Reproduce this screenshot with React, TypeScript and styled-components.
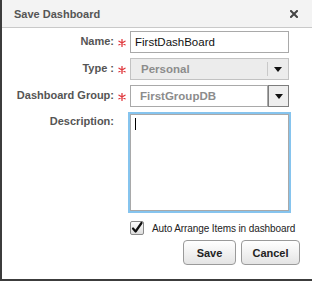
import React from 'react'
import styled, { createGlobalStyle } from 'styled-components'

const GlobalStyle = createGlobalStyle`
  html, body {
    margin: 0;
    padding: 0;
    background: #ffffff;
  }
  body {
    font-family: "Liberation Sans", Arial, Helvetica, sans-serif;
  }
`

const Dialog = styled.div`
  width: 312px;
  height: 281px;
  box-sizing: border-box;
  background: #ffffff;
  border-left: 2px solid #3c3c3c;
  border-bottom: 2px solid #3c3c3c;
  display: flex;
  flex-direction: column;
`

const TitleBar = styled.div`
  height: 27px;
  background: #f3f3f3;
  border-bottom: 1px solid #c9c9c9;
  display: flex;
  align-items: center;
  justify-content: space-between;
  padding: 0 14px 0 12px;
`

const Title = styled.span`
  font-size: 11px;
  font-weight: bold;
  color: #555555;
`

const CloseBtn = styled.span`
  display: flex;
  width: 8px;
  height: 8px;
`

const Form = styled.div`
  display: grid;
  grid-template-columns: 112px 16px 159px;
  grid-template-rows: 22px 22px 22px 101px;
  row-gap: 5px;
  padding-top: 3px;
  align-items: center;
`

const Label = styled.label<{ top?: boolean }>`
  font-size: 11px;
  font-weight: bold;
  color: #555555;
  text-align: right;
  align-self: ${(p) => (p.top ? 'start' : 'center')};
  padding-top: ${(p) => (p.top ? '5px' : '0')};
  margin-top: -2px;
`

const Star = styled.span`
  display: flex;
  justify-content: center;
  align-items: center;
  padding-top: 1px;
`

const TextInput = styled.div`
  height: 22px;
  box-sizing: border-box;
  border: 1px solid #a9a9a9;
  background: #ffffff;
  font-size: 11.5px;
  color: #111111;
  padding: 0 4px;
  display: flex;
  align-items: center;
`

const Select = styled.div<{ disabled?: boolean }>`
  height: 22px;
  box-sizing: border-box;
  display: flex;
  background: ${(p) => (p.disabled ? '#ececec' : '#ffffff')};
  border: ${(p) => (p.disabled ? '1px solid #c2c2c2' : 'none')};
`

const SelectValue = styled.div<{ boxed?: boolean }>`
  flex: 1;
  display: flex;
  align-items: center;
  padding: 0 ${(p) => (p.boxed ? '9px' : '10px')};
  font-size: 11.5px;
  font-weight: bold;
  color: #8c8c8c;
  box-sizing: border-box;
  border: ${(p) => (p.boxed ? '1px solid #a9a9a9' : 'none')};
`

const ArrowBox = styled.div<{ boxed?: boolean }>`
  width: 21px;
  flex: none;
  display: flex;
  align-items: center;
  justify-content: center;
  box-sizing: border-box;
  background: ${(p) => (p.boxed ? '#eeeeee' : 'transparent')};
  border: ${(p) => (p.boxed ? '1px solid #7d7d7d' : 'none')};
  border-left: ${(p) => (p.boxed ? '1px solid #7d7d7d' : '1px solid #c9c9c9')};
  margin: ${(p) => (p.boxed ? '0' : '3px 0')};
`

const Arrow = styled.span`
  width: 0;
  height: 0;
  border-left: 4px solid transparent;
  border-right: 4px solid transparent;
  border-top: 5px solid #111111;
`

const TextArea = styled.div`
  align-self: start;
  height: 97px;
  margin-top: 2px;
  box-sizing: border-box;
  border: 1px solid #a9a9a9;
  outline: 2px solid #86c4ee;
  background: #ffffff;
  padding: 3px 4px;
`

const Caret = styled.span`
  display: block;
  width: 1px;
  height: 12px;
  background: #000000;
`

const CheckRow = styled.div`
  display: flex;
  align-items: center;
  gap: 8px;
  padding-left: 128px;
  margin-top: 8px;
`

const CheckText = styled.span`
  font-size: 10px;
  letter-spacing: -0.1px;
  color: #222222;
`

const Buttons = styled.div`
  display: flex;
  justify-content: flex-end;
  gap: 5px;
  padding-right: 12px;
  margin-top: 5px;
`

const Button = styled.button<{ w: number }>`
  width: ${(p) => p.w}px;
  height: 25px;
  border: 1px solid #9a9a9a;
  border-radius: 4px;
  background: linear-gradient(#ffffff, #e4e4e4);
  font-family: "Liberation Sans", Arial, Helvetica, sans-serif;
  font-size: 11px;
  font-weight: bold;
  color: #222222;
  padding: 0;
`

const Asterisk = () => (
  <svg width="8" height="8" viewBox="0 0 8 8">
    <path
      d="M4 0.5 V7.5 M1 2.2 L7 5.8 M7 2.2 L1 5.8"
      stroke="#e0393e"
      strokeWidth="1.3"
      strokeLinecap="round"
    />
  </svg>
)

const CheckBox = () => (
  <svg width="14" height="14" viewBox="0 0 14 14">
    <defs>
      <linearGradient id="cb" x1="0" y1="0" x2="0" y2="1">
        <stop offset="0" stopColor="#ffffff" />
        <stop offset="1" stopColor="#dcdcdc" />
      </linearGradient>
    </defs>
    <rect x="0.5" y="0.5" width="13" height="13" rx="1.5" fill="url(#cb)" stroke="#8a8a8a" />
    <path d="M3 7.5 L5.6 10.5 L11.5 2" fill="none" stroke="#111" strokeWidth="2.2" strokeLinecap="round" strokeLinejoin="round" />
  </svg>
)

export default function App() {
  return (
    <>
      <GlobalStyle />
      <Dialog>
        <TitleBar>
          <Title>Save Dashboard</Title>
          <CloseBtn>
            <svg width="8" height="8" viewBox="0 0 8 8">
              <path d="M1 1 L7 7 M7 1 L1 7" stroke="#444" strokeWidth="2" strokeLinecap="square" />
            </svg>
          </CloseBtn>
        </TitleBar>
        <Form>
          <Label>Name:</Label>
          <Star><Asterisk /></Star>
          <TextInput>FirstDashBoard</TextInput>

          <Label>Type :</Label>
          <Star><Asterisk /></Star>
          <Select disabled>
            <SelectValue>Personal</SelectValue>
            <ArrowBox>
              <Arrow />
            </ArrowBox>
          </Select>

          <Label>Dashboard Group:</Label>
          <Star><Asterisk /></Star>
          <Select>
            <SelectValue boxed>FirstGroupDB</SelectValue>
            <ArrowBox boxed>
              <Arrow />
            </ArrowBox>
          </Select>

          <Label top>Description:</Label>
          <span />
          <TextArea>
            <Caret />
          </TextArea>
        </Form>
        <CheckRow>
          <CheckBox />
          <CheckText>Auto Arrange Items in dashboard</CheckText>
        </CheckRow>
        <Buttons>
          <Button w={53}>Save</Button>
          <Button w={59}>Cancel</Button>
        </Buttons>
      </Dialog>
    </>
  )
}
